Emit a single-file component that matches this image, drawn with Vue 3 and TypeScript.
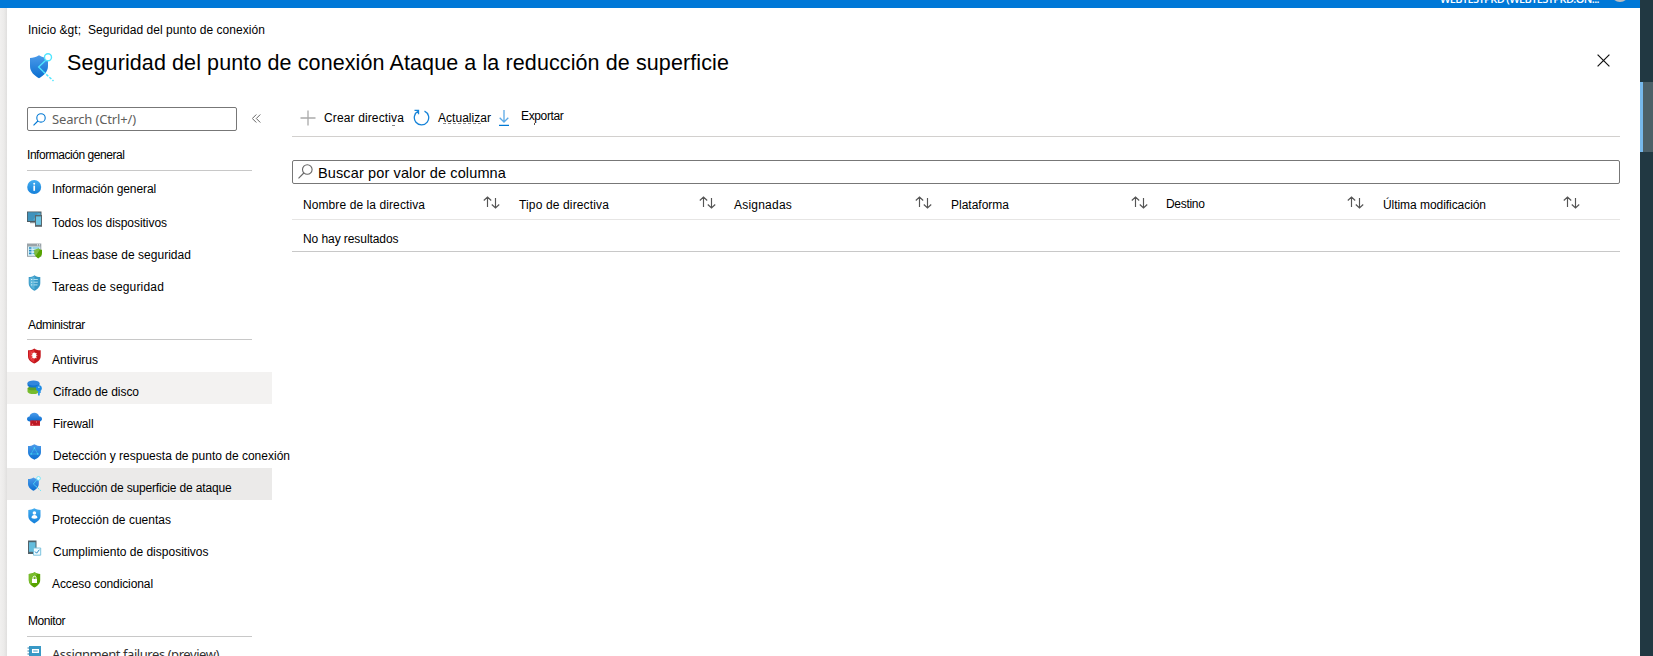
<script setup lang="ts">
interface NavItem {
  label: string
  icon: string
  width: number
  state?: string
}
interface NavGroup {
  title: string
  width: number
  key: string
  items: NavItem[]
}
interface Column {
  label: string
  width: number
  key: string
}

const groups: NavGroup[] = [
  {
    title: 'Información general', width: 97.5, key: 'overview',
    items: [
      { label: 'Información general', icon: 'info', width: 104, state: 'raised' },
      { label: 'Todos los dispositivos', icon: 'devices', width: 115 },
      { label: 'Líneas base de seguridad', icon: 'baseline', width: 139 },
      { label: 'Tareas de seguridad', icon: 'tasks', width: 112 },
    ],
  },
  {
    title: 'Administrar', width: 57, key: 'manage',
    items: [
      { label: 'Antivirus', icon: 'antivirus', width: 46 },
      { label: 'Cifrado de disco', icon: 'disk', width: 87, state: 'hovered' },
      { label: 'Firewall', icon: 'firewall', width: 41.5 },
      { label: 'Detección y respuesta de punto de conexión', icon: 'detect', width: 238 },
      { label: 'Reducción de superficie de ataque', icon: 'surface', width: 179.5, state: 'selected' },
      { label: 'Protección de cuentas', icon: 'account', width: 119 },
      { label: 'Cumplimiento de dispositivos', icon: 'compliance', width: 156.5 },
      { label: 'Acceso condicional', icon: 'access', width: 101 },
    ],
  },
  {
    title: 'Monitor', width: 37, key: 'monitor',
    items: [{ label: 'Assignment failures (preview)', icon: 'log', width: 167, state: 'latin' }],
  },
]

const columns: Column[] = [
  { label: 'Nombre de la directiva', width: 122, key: 'name' },
  { label: 'Tipo de directiva', width: 90, key: 'type' },
  { label: 'Asignadas', width: 58, key: 'assigned' },
  { label: 'Plataforma', width: 58, key: 'platform' },
  { label: 'Destino', width: 38.5, key: 'target' },
  { label: 'Última modificación', width: 103, key: 'modified' },
]

// Spreads a label's tracking so that it occupies the given width.
const vFit = {
  mounted(el: HTMLElement, binding: { value: number }) {
    const count = (el.textContent ?? '').length
    if (count < 2) return
    const natural = el.getBoundingClientRect().width
    el.style.letterSpacing = `${(binding.value - natural) / count}px`
  },
}
</script>

<template>
  <div class="screen">
    <svg class="defs" width="0" height="0">
      <defs>
        <linearGradient id="blue" x1="0" y1="0" x2="0" y2="1">
          <stop offset="0" stop-color="#4c9bea" /><stop offset="1" stop-color="#0a6ed0" />
        </linearGradient>
        <linearGradient id="sky" x1="0" y1="0" x2="0" y2="1">
          <stop offset="0" stop-color="#44adf0" /><stop offset="1" stop-color="#1580da" />
        </linearGradient>
      </defs>
    </svg>
    <header class="topbar">
      <span v-fit="159" class="tenant">WEBTESTPRD (WEBTESTPRD.ON...</span>
      <span class="avatar"></span>
    </header>
    <div class="body">
      <div class="edge"></div>
      <main class="blade">
        <nav class="crumbs">
          <span v-fit="53">Inicio &amp;gt;</span>
          <span v-fit="177">Seguridad del punto de conexión</span>
        </nav>
        <div class="titlebar">
          <svg class="logo" viewBox="0 0 26 30">
            <path d="M10 2.2C7 4.3 4 4.8 1 5v8c0 6 4.500 9.600 9 12.300 4.500-2.700 9-6.300 9-12.300V5c-3-.2-6-.7-9-2.800z" fill="url(#blue)" />
            <path d="M16.500 7.500L9.600 14l4.600 4.500" fill="none" stroke="#50e6ff" stroke-width="1.300" />
            <path d="M14.200 18.500L24.500 28" fill="none" stroke="#50e6ff" stroke-width="1.500" stroke-dasharray="2.700 1.500" />
            <circle cx="19" cy="4.200" r="3.500" fill="#fff" stroke="#50e6ff" stroke-width="1.400" />
          </svg>
          <h1><span v-fit="662">Seguridad del punto de conexión Ataque a la reducción de superficie</span></h1>
          <svg class="close" viewBox="0 0 13 13"><path d="M.6.6l11.800 11.800M12.400.6L.6 12.400" stroke="#111" stroke-width="1.200" /></svg>
        </div>
        <div class="columns">
          <aside class="sidebar">
            <div class="searchrow">
              <div class="search">
                <svg viewBox="0 0 13 13"><circle cx="8" cy="4.900" r="4.200" /><path d="M4.900 8L.5 12.400" /></svg>
                <span v-fit="84">Search (Ctrl+/)</span>
              </div>
              <svg class="collapse" viewBox="0 0 9 9"><path d="M4.300.5l-4 4 4 4M8.300.5l-4 4 4 4" /></svg>
            </div>
            <section v-for="group in groups" :key="group.key" class="group" :class="group.key">
              <h2><span v-fit="group.width">{{ group.title }}</span></h2>
              <div v-for="item in group.items" :key="item.icon" class="item" :class="[item.state, item.icon]">
                <svg class="icon" viewBox="0 0 15 16">
                  <template v-if="item.icon === 'info'">
                    <circle cx="7.200" cy="8" r="7" fill="url(#sky)" />
                    <circle cx="7.200" cy="4.700" r="1" fill="#fff" /><path d="M7.200 6.600v5.200" stroke="#fff" stroke-width="1.700" />
                  </template>
                  <template v-else-if="item.icon === 'devices'">
                    <path d="M0 .5h14.500V11H0z" fill="#4d5a60" /><path d="M.9 1.600h12.700v8.200H.9z" fill="#4fa6cc" />
                    <path d="M.9 1.600h10.500l-6 8.200H.9z" fill="#3f93bd" /><path d="M3 11h5v1.200H3z" fill="#8b969a" />
                    <path d="M8 4h7v11.800H8z" fill="#59666c" /><path d="M9 5.400h5v8.500H9z" fill="#6cc4e3" />
                  </template>
                  <template v-else-if="item.icon === 'baseline'">
                    <path d="M0 .5h14.300v13.300H0z" fill="#9aa3a8" /><path d="M1 3.500h12.300v9.300H1z" fill="#d9f2fa" />
                    <path d="M2 5h2.500M2 7.700h2.500M2 10.400h2.500" stroke="#278ac2" stroke-width="1.700" />
                    <path d="M5.500 5h7M5.500 7.700h4M5.500 10.400h3" stroke="#55b5d6" />
                    <path d="M10 1.900h1M12 1.900h1" stroke="#fff" />
                    <path d="M11.200 5.500c-1.200.9-2.400 1.200-3.700 1.200v3.300c0 2.700 1.800 4.200 3.700 5.500 2-1.300 3.800-2.800 3.800-5.500V6.700c-1.300 0-2.600-.3-3.800-1.200z" fill="#57a300" />
                    <path d="M11.200 5.500c-1.200.9-2.400 1.200-3.700 1.200v3.300c0 1.300.4 2.400 1 3.200L13 6.400c-.6-.2-1.200-.5-1.800-.9z" fill="#7fba42" />
                  </template>
                  <template v-else-if="item.icon === 'tasks'">
                    <path d="M7.500.2C5.500 1.700 3.700 2 1.700 2v6c0 4 2.900 6.100 5.800 7.800 2.900-1.700 5.800-3.800 5.800-7.800V2c-2 0-3.800-.3-5.800-1.800z" fill="#3999c6" />
                    <path d="M7.500 1.300C5.800 2.500 4.300 2.900 2.600 3v5c0 3.300 2.400 5.100 4.900 6.600z" fill="#59b4d9" />
                    <path d="M6.500 4.500h4.300M6.500 7.200h4.300M6.500 9.900h4" stroke="#c9edf8" stroke-width=".8" /><path d="M4 4.500h1.300M4 7.200h1.300M4 9.900h1.300" stroke="#fff" stroke-width=".8" />
                  </template>
                  <template v-else-if="item.icon === 'antivirus'">
                    <path d="M7.300.5C5.300 2 3.200 2.300 1 2.300V8c0 4 3 6 6.300 7.600C10.600 14 13.700 12 13.700 8V2.300C11.400 2.300 9.300 2 7.300.5z" fill="#c4161c" />
                    <path d="M7.300 1.500v13C4.400 13 1.900 11.300 1.900 8V3.100c2 0 3.800-.4 5.400-1.600z" fill="#e3343a" />
                    <ellipse cx="7.300" cy="7.600" rx="2" ry="3" fill="#fff" /><path d="M4.600 5.200l5.400 5M10 5.200l-5.400 5M4.300 7.600h6" stroke="#fff" stroke-width=".6" />
                  </template>
                  <template v-else-if="item.icon === 'disk'">
                    <path d="M.5 8.500v3c0 1.600 3 2.600 6 2.600s5-1 5-2.600v-3z" fill="#76bc2d" /><ellipse cx="6" cy="8.300" rx="5.500" ry="2" fill="#5da12a" />
                    <path d="M.5 3v2C.5 6.600 3.200 7.600 6.500 7.600s6-1 6-2.600V3z" fill="#1476cf" /><ellipse cx="6.500" cy="3" rx="6" ry="2.400" fill="#3286dc" />
                    <circle cx="11.900" cy="8.200" r="2.900" fill="#1e8ce4" /><path d="M11.900 10v5.500M11.900 12h2" stroke="#1e8ce4" stroke-width="1.600" /><circle cx="11.900" cy="7.300" r=".8" fill="#b8e4ff" />
                  </template>
                  <template v-else-if="item.icon === 'firewall'">
                    <path d="M3 9.500C1.200 9.500 0 8.500 0 7c0-1.300 1-2.400 2.500-2.500C3 2 5 .8 7.300.8c2.400 0 4.300 1.300 4.700 3.500 1.800 0 3 1.100 3 2.600s-1.300 2.600-3 2.600z" fill="url(#blue)" />
                    <path d="M3.200 8.400H13v5.400H3.200z" fill="#c61b28" /><path d="M4 11h8M6 8.500V11M10 8.500V11M8 11v2.500" stroke="#a51420" stroke-width=".6" /><path d="M5 12.300h1M9 10h1" stroke="#ff8d8d" />
                  </template>
                  <template v-else-if="item.icon === 'detect'">
                    <path d="M7.400.3C5.300 1.700 3.200 2 1 2v6c0 4 3.200 6.200 6.400 7.700C10.700 14.200 14 12 14 8V2C11.700 2 9.500 1.700 7.400.3z" fill="url(#blue)" />
                    <path d="M7.400 4L4 10h6.900z" fill="none" stroke="#3cccef" stroke-width=".6" /><circle cx="7.400" cy="4" r=".7" fill="#50e6ff" /><circle cx="4" cy="10" r=".7" fill="#50e6ff" /><circle cx="10.900" cy="10" r=".7" fill="#50e6ff" />
                  </template>
                  <template v-else-if="item.icon === 'surface'">
                    <path d="M6.500 1.600C4.800 2.800 3 3.100 1 3.100v4.600c0 3.400 2.600 5.500 5.500 7 2.800-1.500 5.300-3.600 5.300-7V3.100c-1.900 0-3.700-.3-5.300-1.500z" fill="url(#blue)" />
                    <path d="M10 3.500L6.300 8 9 10.400" fill="none" stroke="#50d9f7" stroke-width=".8" /><path d="M9 10.400l4.800 4.300" stroke="#50e6ff" stroke-dasharray="1.600 1" />
                    <circle cx="11.500" cy="2.400" r="1.900" fill="#e9fbff" stroke="#62e3fa" stroke-width=".8" />
                  </template>
                  <template v-else-if="item.icon === 'account'">
                    <path d="M7.300.3C5.400 1.600 3.400 2 1.300 2v5.800c0 4 3 6 6 7.600 3.100-1.600 6.200-3.600 6.200-7.600V2c-2.200 0-4.200-.4-6.200-1.700z" fill="url(#sky)" />
                    <circle cx="7.400" cy="5" r="1.800" fill="#fff" /><path d="M4.500 10C4.500 7.800 5.700 7 7.400 7s3 .8 3 3c-1.800.9-4.200.9-5.900 0z" fill="#fff" />
                  </template>
                  <template v-else-if="item.icon === 'compliance'">
                    <path d="M1 .5h8.500V14H1z" fill="#52626a" /><path d="M2 2.200h6.500v9.600H2z" fill="#65bddd" />
                    <path d="M6.500 8h7.200v7.200H6.500z" fill="#eefaff" stroke="#72bfdd" stroke-width=".9" /><path d="M8 11.500l1.600 1.700 2.800-3.500" fill="none" stroke="#2688c2" />
                  </template>
                  <template v-else-if="item.icon === 'access'">
                    <path d="M7.500.3C5.600 1.600 3.800 2 1.800 2v6c0 3.900 2.800 5.900 5.700 7.500 2.900-1.600 5.700-3.600 5.700-7.500V2c-2 0-3.800-.4-5.700-1.700z" fill="#57a300" />
                    <path d="M7.500.3C5.600 1.600 3.800 2 1.800 2v6c0 2 .8 3.600 1.900 4.700L10.500 1.600c-1-.2-2-.6-3-1.300z" fill="#78bc2c" />
                    <path d="M5 7h5v4H5z" fill="#fff" /><path d="M6 7V5.700a1.500 1.500 0 013 0V7" fill="none" stroke="#fff" />
                  </template>
                  <template v-else>
                    <path d="M2 1h12v15H2z" fill="#3999c6" /><path d="M.5 3h2M.5 6h2M.5 9h2M.5 12h2" stroke="#2b7aa5" /><path d="M5 4h7v4H5z" fill="#fff" /><path d="M6.200 6h4.500" stroke="#3999c6" />
                  </template>
                </svg>
                <span v-fit="item.width" class="label">{{ item.label }}</span>
              </div>
            </section>
          </aside>
          <div class="content">
            <div class="toolbar">
              <svg class="plus" viewBox="0 0 16 16"><path d="M8 .5v15M.5 8h15" /></svg>
              <span v-fit="80" class="create">Crear directiva<i class="tail"></i></span>
              <svg class="refresh" viewBox="0 0 17 17"><path d="M5.300 2.200A7.200 7.200 0 1 0 11.500 2.100M1.500 1.300h4v4" /></svg>
              <span v-fit="53" class="update">Actualizar<i class="tail"></i></span>
              <svg class="download" viewBox="0 0 10 16"><path d="M5 0v12M.7 7.800L5 12l4.300-4.200" /><path class="base" d="M0 15.400h10" /></svg>
              <span v-fit="42.5" class="export">Exportar<i class="tail"></i></span>
            </div>
            <div class="filter">
              <svg viewBox="0 0 15 15"><circle cx="9.300" cy="5.500" r="4.800" /><path d="M5.800 9L.5 14.300" /></svg>
              <span v-fit="188">Buscar por valor de columna</span>
            </div>
            <div class="thead">
              <div v-for="col in columns" :key="col.key" class="th" :class="col.key">
                <span v-fit="col.width">{{ col.label }}</span>
                <svg viewBox="0 0 17 13"><path d="M4.500 11V1M.8 4.500L4.500 1l3.700 3.500M12.500 2v10M8.800 8.500l3.700 3.500 3.700-3.500" /></svg>
              </div>
            </div>
            <div class="empty"><span v-fit="95.5">No hay resultados</span></div>
          </div>
        </div>
      </main>
      <div class="desktop"><div class="taskitem"></div></div>
    </div>
  </div>
</template>

<style>
html, body { margin: 0; background: #fff; overflow: hidden; }
</style>

<style scoped>
.screen { position: relative; width: 1653px; height: 656px; overflow: hidden; background: #fff; color: #000; font: 12px/16px "Liberation Sans", Arial, sans-serif; }
.defs { position: absolute; }
svg { display: block; flex: none; fill: none; }
span { white-space: nowrap; display: inline-block; flex: none; }
.topbar { height: 8px; width: 1640px; background: #0078d7; display: flex; overflow: hidden; color: #fff; }
.tenant { margin: -8px 0 0 1440px; font: 600 11px/14px "Open Sans", "Noto Sans", sans-serif; }
.avatar { width: 18px; height: 18px; border-radius: 50%; background: #b9bdc1; margin: -16px 0 0 12px; }
.body { display: flex; height: 648px; }
.edge { width: 7px; background: linear-gradient(90deg, #f1f0ef, #ecebea 55%, #e0dfde); }
.blade { width: 1633px; background: #fff; }
.desktop { width: 13px; height: 656px; margin-top: -8px; background: #213842; }
.taskitem { height: 70px; margin-top: 82px; border-left: 3px solid #76b9ed; background: #4c6068; }
.desktop { display: flow-root; }
.crumbs { display: flex; height: 16px; padding: 14px 0 0 21px; gap: 7px; }
.titlebar { display: flex; height: 69px; }
.logo { width: 26px; height: 30px; margin: 15px 0 0 22px; }
h1 { font: normal 21.500px/28px "Liberation Sans", Arial, sans-serif; margin: 11px 0 0 12px; width: 1524px; flex: none; }
.close { width: 13px; height: 13px; margin: 16px 0 0 6px; }
.columns { display: flex; }
.sidebar { width: 285px; flex: none; }
.searchrow { display: flex; height: 24px; padding-left: 20px; }
.search { display: flex; box-sizing: border-box; width: 210px; height: 24px; border: 1px solid #777; border-radius: 2px; color: #605e5c; font: 13px/22px "Noto Sans", "Open Sans", sans-serif; }
.search svg { width: 13px; height: 13px; margin: 5px 6px 0 5px; stroke: #0078d4; stroke-width: 1.100; }
.collapse { width: 9px; height: 9px; margin: 7px 0 0 15px; stroke: #666; stroke-width: 1; }
h2 { font: normal 12px/16px "Liberation Sans", Arial, sans-serif; margin: 0 0 0 20px; width: 225px; box-sizing: border-box; border-bottom: 1px solid #c8c8c8; }
.overview h2 { height: 24px; margin-top: 16px; }
.overview { padding-bottom: 1px; }
.manage h2 { height: 23px; margin-top: 16px; }
.monitor h2 { height: 24px; margin-top: 17px; }
.manage h2, .monitor h2 { padding-left: 1px; }
.overview h2 { margin-bottom: 1px; }
.item { display: flex; width: 265px; height: 32px; }
.hovered { background: #f3f2f1; }
.selected { background: #ebeae9; }
.icon { width: 15px; height: 16px; margin: 8px 10px 0 20px; }
.label { margin-top: 12px; }
.raised .label { margin-top: 9px; }
.overview .item:not(.raised) .label { margin-top: 11px; }
.overview .icon { margin-top: 7px; }
.latin { color: #323130; }
.latin .label { font: 13px/20px "Noto Sans", "Open Sans", sans-serif; margin-top: 7px; }
.hovered .label, .firewall .label, .detect .label, .compliance .label { padding-left: 1px; }
.content { width: 1328px; }
.toolbar { display: flex; height: 29px; border-bottom: 1px solid #d2d0ce; }
.toolbar span { position: relative; margin-top: 3px; }
.plus { width: 16px; height: 16px; margin: 3px 8px 0 8px; stroke: #aaa; stroke-width: 1.300; }
.refresh { width: 17px; height: 17px; margin: 2px 8px 0 9px; stroke: #1683d8; stroke-width: 1.300; }
.download { width: 10px; height: 16px; margin: 3px 11px 0 8px; stroke: #5aa9e6; stroke-width: 1.300; }
.download .base { stroke: #0078d4; }
.toolbar .export { margin: 1px 0 0 1px; }
.tail { position: absolute; background: #888; height: 1px; }
.create .tail { left: 68px; top: 15px; width: 3px; }
.update .tail { left: 5px; top: 13px; width: 38px; height: 1px; background: repeating-linear-gradient(90deg, #888 0 3px, transparent 3px 5px); }
.export .tail { left: 13px; top: 15px; width: 1px; height: 2px; background: #555; }
.filter { display: flex; box-sizing: border-box; height: 24px; margin-top: 23px; border: 1px solid #777; border-radius: 2px; font-size: 14.500px; line-height: 24px; }
.filter svg { width: 15px; height: 15px; margin: 3px 5px 0 5px; stroke: #666; stroke-width: 1.100; }
.thead { display: flex; height: 35px; padding-left: 11px; border-bottom: 1px solid #e6e5e4; }
.th { width: 216px; display: flex; justify-content: space-between; flex: none; }
.th span { margin-top: 13px; }
.target span { margin-top: 12px; }
.th svg { width: 17px; height: 13px; margin: 12px 19px 0 0; stroke: #555; stroke-width: 1.150; }
.assigned span { margin-left: -1px; }
.target span { margin-left: -1px; }
.empty { height: 31px; padding-left: 11px; border-bottom: 1px solid #c8c8c8; }
.empty span { margin-top: 11px; }
</style>
